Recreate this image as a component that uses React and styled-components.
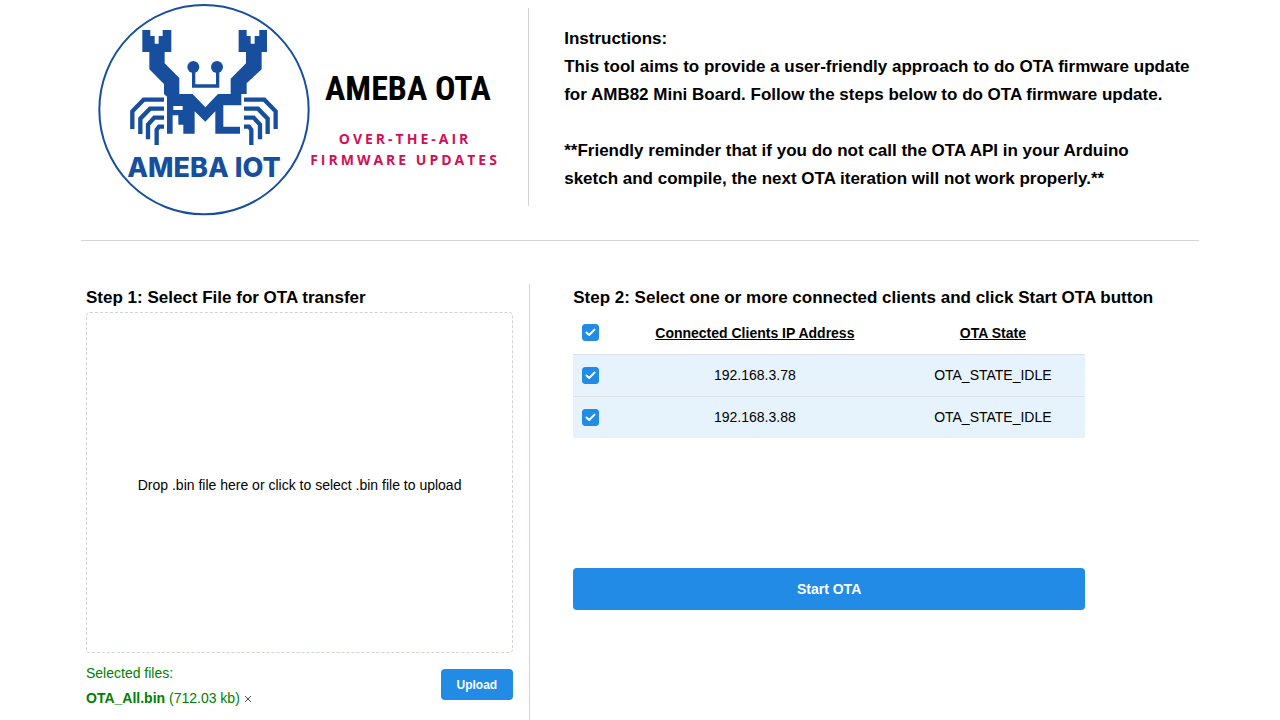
import React, { useState } from "react";
import styled, { createGlobalStyle } from "styled-components";

const GlobalStyle = createGlobalStyle`
  *, *::before, *::after { box-sizing: border-box; }
  body {
    margin: 0;
    background: #fff;
    color: #000;
    font-family: "Liberation Sans", Arial, Helvetica, sans-serif;
    font-size: 14px;
    line-height: 20px;
  }
`;

const Page = styled.div`
  display: flex;
  flex-direction: column;
  min-height: 100vh;
  padding: 0 81px;
`;

const Header = styled.header`
  display: grid;
  grid-template-columns: 2fr 3fr;
  border-bottom: 1px solid #d4d4d4;
`;

const Brand = styled.div`
  display: flex;
  padding: 0 0 21px 9px;
`;

const Logo = styled.svg`
  display: block;
  flex: none;
`;

const Instructions = styled.section`
  margin: 8px 0 34px;
  padding: 17px 0 0 35px;
  border-left: 1px solid #d4d4d4;
  font-size: 17px;
  font-weight: 700;
  line-height: 28px;

  p {
    margin: 0;
  }

  p + p {
    margin-top: 28px;
  }
`;

const Steps = styled.main`
  display: grid;
  flex: 1;
  grid-template-columns: 2fr 3fr;
  padding: 43px 5px 0;
`;

const FilePanel = styled.section`
  padding: 0 16px 8px 0;
`;

const ClientPanel = styled.section`
  padding-left: 43px;
  border-left: 1px solid #d4d4d4;
`;

const StepTitle = styled.h2`
  margin: 0;
  font-size: 17px;
  line-height: 28px;
`;

const DropZone = styled.label`
  display: flex;
  align-items: center;
  justify-content: center;
  min-height: 341px;
  padding-top: 4px;
  border: 1px dashed #ced4da;
  border-radius: 4px;
  cursor: pointer;
`;

const HiddenFile = styled.input`
  width: 0;
  height: 0;
  opacity: 0;
`;

const UploadRow = styled.div`
  display: flex;
  align-items: flex-start;
  justify-content: space-between;
  padding-top: 8px;
`;

const FileInfo = styled.div`
  color: #008000;
  line-height: 25px;
`;

const RemoveButton = styled.button`
  padding: 0;
  border: 0;
  background: none;
  color: #495057;
  cursor: pointer;
`;

const Button = styled.button`
  width: ${(p) => (p.$wide ? "100%" : "auto")};
  height: ${(p) => (p.$wide ? "42px" : "31px")};
  margin-top: ${(p) => (p.$wide ? "0" : "8px")};
  padding: 0 16px;
  border: 0;
  border-radius: 4px;
  background: #228be6;
  color: #fff;
  font-family: inherit;
  font-size: ${(p) => (p.$wide ? "14px" : "12px")};
  font-weight: 700;
  cursor: pointer;
`;

const ClientArea = styled.div`
  margin-right: 109px;
`;

const TableWrap = styled.div`
  min-height: 256px;
`;

const Table = styled.table`
  width: 100%;
  border-collapse: collapse;
  table-layout: fixed;
`;

const HeadCell = styled.th`
  width: ${(p) => p.$width};
  height: 42px;
  padding: 0 9px;
  text-align: center;
  text-decoration: underline;
`;

const Row = styled.tr`
  border-top: 1px solid #dee2e6;
  background: ${(p) => (p.$selected ? "#e7f3fc" : "transparent")};
`;

const Cell = styled.td`
  height: 42px;
  padding: 0 9px;
  text-align: center;
`;

const CheckBox = styled.label`
  display: grid;
  width: 17px;
  height: 17px;
  place-items: center;

  input {
    grid-area: 1 / 1;
    width: 17px;
    height: 17px;
    margin: 0;
    border: 1px solid #ced4da;
    border-radius: 3px;
    background: #fff;
    appearance: none;
  }

  input:checked {
    border-color: #228be6;
    background: #228be6;
  }

  svg {
    z-index: 1;
    grid-area: 1 / 1;
    pointer-events: none;
  }
`;

const legs = [
  "M222 299H161L127 334V387",
  "M222 326H180L151 356V402",
  "M222 353H193L174 374V418",
  "M222 380H207L200 389V435",
];

const body =
  "M157 90H181V108H194V131H206V108H218V90H244V156H224V190L268 234V282H308L346 322L384 282H422V236L468 190V156H446V90H470V108H482V131H494V108H508V90H531V156H515V208L470 250V282H454V316H400V380H450V401H376V334L346 365L314 334V401H280V374H265V346H248V401H231V290L222 282V252L178 208V156H157ZM250 318V330H278V318Z";

function BrandLogo() {
  return (
    <Logo width="420" height="219" viewBox="0 0 420 219" role="img" aria-label="Ameba IoT, Ameba OTA">
      <g transform="scale(0.3333)" fill="none" stroke="#174f9e">
        <circle cx="342" cy="329" r="314" strokeWidth="6" />
        <path d={body} fill="#174f9e" fillRule="evenodd" stroke="none" />
        <path d="M311 205V258H383V205" strokeWidth="10" />
        <circle cx="310" cy="201" r="18" fill="#174f9e" stroke="none" />
        <circle cx="381" cy="201" r="18" fill="#174f9e" stroke="none" />
        {legs.map((d) => (
          <path key={d} d={d} strokeWidth="13" />
        ))}
        <g transform="translate(684 0) scale(-1 1)">
          {legs.map((d) => (
            <path key={d} d={d} strokeWidth="13" />
          ))}
        </g>
      </g>
      <g textAnchor="middle">
        <text x="114" y="177" fontFamily="Inter, sans-serif" fontSize="27" fontWeight="800" fill="#174f9e">
          AMEBA IOT
        </text>
        <text
          x="318"
          y="100"
          fontFamily="'Roboto Condensed', Roboto, sans-serif"
          fontSize="34"
          fontWeight="700"
          fill="#000"
        >
          AMEBA OTA
        </text>
        <g fontFamily="'Open Sans', sans-serif" fontSize="14" fontWeight="700" letterSpacing="3" fill="#d10f56">
          <text x="315" y="144">OVER-THE-AIR</text>
          <text x="315" y="165">FIRMWARE UPDATES</text>
        </g>
      </g>
    </Logo>
  );
}

function Check({ label, checked, onChange }) {
  return (
    <CheckBox>
      <input type="checkbox" aria-label={label} checked={checked} onChange={onChange} />
      {checked && (
        <svg width="11" height="9" viewBox="0 0 11 9" fill="none" stroke="#fff" strokeWidth="2" strokeLinecap="round" strokeLinejoin="round">
          <path d="M1.5 4.5L4.2 7L9.5 1.6" />
        </svg>
      )}
    </CheckBox>
  );
}

const clients = [
  { ip: "192.168.3.78", state: "OTA_STATE_IDLE" },
  { ip: "192.168.3.88", state: "OTA_STATE_IDLE" },
];

export default function App() {
  const [selected, setSelected] = useState(clients.map((c) => c.ip));
  const all = selected.length === clients.length;
  const toggle = (ip) =>
    setSelected((s) => (s.includes(ip) ? s.filter((x) => x !== ip) : [...s, ip]));

  return (
    <>
      <GlobalStyle />
      <Page>
        <Header>
          <Brand>
            <BrandLogo />
          </Brand>
          <Instructions>
            <p>
              Instructions:
              <br />
              This tool aims to provide a user-friendly approach to do OTA firmware update
              <br />
              for AMB82 Mini Board. Follow the steps below to do OTA firmware update.
            </p>
            <p>
              **Friendly reminder that if you do not call the OTA API in your Arduino
              <br />
              sketch and compile, the next OTA iteration will not work properly.**
            </p>
          </Instructions>
        </Header>
        <Steps>
          <FilePanel>
            <StepTitle>Step 1: Select File for OTA transfer</StepTitle>
            <DropZone>
              <HiddenFile type="file" accept=".bin" />
              Drop .bin file here or click to select .bin file to upload
            </DropZone>
            <UploadRow>
              <FileInfo>
                <div>Selected files:</div>
                <div>
                  <b>OTA_All.bin</b> (712.03 kb){" "}
                  <RemoveButton type="button" aria-label="Remove file">
                    <svg width="8" height="8" viewBox="0 0 8 8" stroke="currentColor" strokeWidth="1">
                      <path d="M1 1L7 7M7 1L1 7" />
                    </svg>
                  </RemoveButton>
                </div>
              </FileInfo>
              <Button type="button">Upload</Button>
            </UploadRow>
          </FilePanel>
          <ClientPanel>
            <StepTitle>Step 2: Select one or more connected clients and click Start OTA button</StepTitle>
            <ClientArea>
              <TableWrap>
                <Table>
                  <thead>
                    <tr>
                      <HeadCell $width="7%">
                        <Check
                          label="Select all clients"
                          checked={all}
                          onChange={() => setSelected(all ? [] : clients.map((c) => c.ip))}
                        />
                      </HeadCell>
                      <HeadCell $width="57%">Connected Clients IP Address</HeadCell>
                      <HeadCell $width="36%">OTA State</HeadCell>
                    </tr>
                  </thead>
                  <tbody>
                    {clients.map((c) => (
                      <Row key={c.ip} $selected={selected.includes(c.ip)}>
                        <Cell>
                          <Check
                            label={`Select ${c.ip}`}
                            checked={selected.includes(c.ip)}
                            onChange={() => toggle(c.ip)}
                          />
                        </Cell>
                        <Cell>{c.ip}</Cell>
                        <Cell>{c.state}</Cell>
                      </Row>
                    ))}
                  </tbody>
                </Table>
              </TableWrap>
              <Button type="button" $wide>
                Start OTA
              </Button>
            </ClientArea>
          </ClientPanel>
        </Steps>
      </Page>
    </>
  );
}
